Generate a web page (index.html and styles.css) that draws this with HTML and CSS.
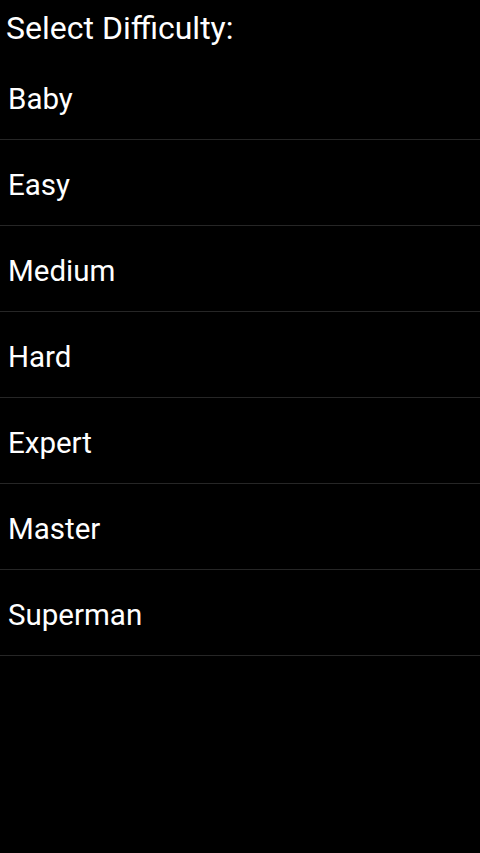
FILE: index.html
```html
<!DOCTYPE html>
<html lang="en">
<head>
  <meta charset="UTF-8">
  <meta name="viewport" content="width=device-width, initial-scale=1">
  <title>Select Difficulty</title>
  <link rel="stylesheet" href="styles.css">
</head>
<body>
  <h1 class="title">Select Difficulty:</h1>
  <ul class="levels">
    <li>Baby</li>
    <li>Easy</li>
    <li>Medium</li>
    <li>Hard</li>
    <li>Expert</li>
    <li>Master</li>
    <li>Superman</li>
  </ul>
</body>
</html>
```

FILE: styles.css
```css
html, body { margin: 0; padding: 0; background: #000; }
body { font-family: Roboto, "Noto Sans", sans-serif; color: #fff; height: 853px; }
.title { margin: 0; height: 54px; padding: 0 0 0 6px; box-sizing: border-box; font-size: 32px; font-weight: normal; line-height: 57px; }
.levels { list-style: none; margin: 0; padding: 0; }
.levels li { height: 85px; border-bottom: 1px solid #262626; padding-left: 8px; font-size: 29.5px; line-height: 90px; }
```
